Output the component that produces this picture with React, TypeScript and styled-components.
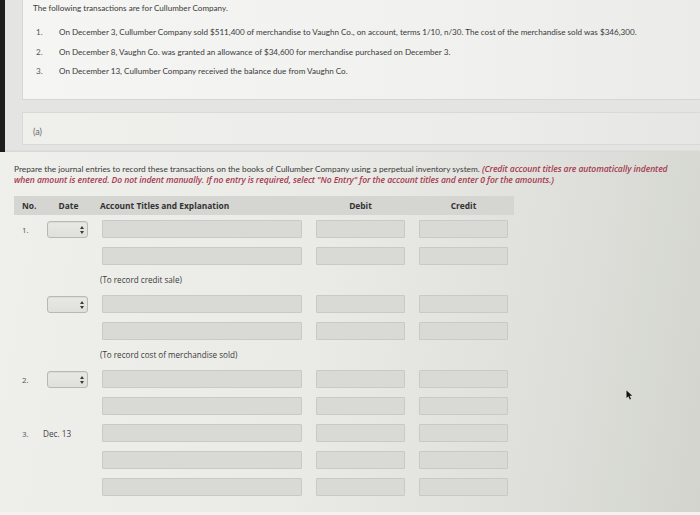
import React from "react";
import styled, {createGlobalStyle} from "styled-components";

const GlobalStyle = createGlobalStyle`
    html, body {
        margin: 0;
        padding: 0;
        background: #f2f2f0;
    }
    body {
        font-family: Lato, "Open Sans", sans-serif;
        color: #3a3a3a;
    }
`;

const Page = styled.div`
    width: 700px;
    height: 515px;
    overflow: hidden;
    display: flex;
    flex-direction: column;
    background: #f2f2f0;
`;

const TopFrame = styled.div`
    display: flex;
    flex-direction: column;
    gap: 12px;
    padding: 0 0 7px 17px;
    background: #e4e4e2;
    border-left: 5px solid #1e1e1e;
`;

const ProblemPanel = styled.div`
    box-sizing: border-box;
    height: 100px;
    padding: 3px 0 0 10px;
    background: linear-gradient(90deg, #f5f5f3 0%, #f1f1ef 60%, #ebebe9 100%);
    border-left: 1px solid #d6d6d3;
    border-bottom: 1px solid #d6d6d3;
`;

const Lead = styled.div`
    font-size: 8.1px;
    line-height: 11px;
`;

const ItemList = styled.ol`
    list-style: none;
    margin: 13px 0 0;
    padding: 0 0 0 3px;
    display: flex;
    flex-direction: column;
    gap: 8.5px;
`;

const Item = styled.li`
    display: grid;
    grid-template-columns: 23px auto;
    font-size: 8.1px;
    line-height: 11px;
`;

const ItemNo = styled.span`
    color: #555;
`;

const PartPanel = styled.div`
    box-sizing: border-box;
    height: 33px;
    padding: 13px 0 0 10px;
    background: linear-gradient(90deg, #efefec 0%, #ececea 70%, #e6e6e4 100%);
    border: 1px solid #d9d9d6;
    border-right: none;
    font-size: 9px;
    line-height: 12px;
    color: #6a6a6a;
`;

const WorkPanel = styled.div`
    position: relative;
    flex: 1;
    padding: 12px 14px 0;
    background: linear-gradient(100deg, #efefec 0%, #eaeae7 45%, #dedfda 78%, #d2d4cd 100%);
    box-shadow: 0 -1px 2px rgba(0, 0, 0, 0.08);
`;

const BottomStrip = styled.div`
    height: 3px;
    background: #f3f3f1;
`;

const Instructions = styled.p`
    margin: 0;
    font-size: 8.3px;
    line-height: 11px;
    white-space: nowrap;
`;

const Emphasis = styled.span`
    font-family: "Open Sans", Lato, sans-serif;
    font-style: italic;
    font-weight: 600;
    font-size: 8.6px;
    letter-spacing: -0.1px;
    color: #a53a4f;
`;

const Table = styled.div`
    width: 500px;
    margin-top: 10px;
`;

const columns = `
    display: grid;
    grid-template-columns: 15px 45px 200px 89px 89px;
    column-gap: 14px;
    align-items: center;
`;

const HeaderRow = styled.div`
    ${columns};
    height: 19px;
    background: #d5d5d2;
    font-family: "Open Sans", Lato, sans-serif;
    font-weight: 700;
    font-size: 8.4px;
    color: #333;
    white-space: nowrap;
`;

const HeadCell = styled.div<{align?: string; shift?: number}>`
    text-align: ${p => p.align || "left"};
    margin-left: ${p => p.shift || 0}px;
`;

const Body = styled.div`
    display: flex;
    flex-direction: column;
    gap: 9px;
    padding-top: 5px;
`;

const EntryRow = styled.div`
    ${columns};
    height: 18px;
`;

const RowNo = styled.div`
    padding-left: 8px;
    font-family: "Open Sans", Lato, sans-serif;
    font-size: 8px;
    color: #555;
`;

const DateText = styled.div`
    font-family: "Open Sans", Lato, sans-serif;
    font-size: 8.2px;
    color: #444;
    white-space: nowrap;
`;

const Select = styled.div`
    box-sizing: border-box;
    position: relative;
    width: 41px;
    height: 17px;
    margin-left: 4px;
    background: linear-gradient(180deg, #e8e8e5 0%, #dfdfdc 100%);
    border: 1px solid #b8b8b4;
    border-radius: 3px;
    box-shadow: inset 0 1px 1px rgba(0, 0, 0, 0.06);

    svg {
        position: absolute;
        right: 3px;
        top: 4px;
    }
`;

const Field = styled.div`
    box-sizing: border-box;
    height: 18px;
    background: #d9d9d5;
    border: 1px solid #c9c9c5;
    border-radius: 1px;
`;

const Note = styled.div`
    ${columns};
    height: 12px;
    font-family: "Open Sans", Lato, sans-serif;
    font-size: 8.1px;
    line-height: 12px;
    color: #3a3a3a;

    span {
        grid-column: 3 / -1;
        margin-left: -2px;
    }
`;

const Cursor = styled.svg`
    position: absolute;
    left: 626px;
    top: 238px;
`;

type Line = {no?: string; date?: "select" | string};
type Entry = {lines: Line[]; note?: string};

const entries: Entry[] = [
    {lines: [{no: "1.", date: "select"}, {}], note: "(To record credit sale)"},
    {lines: [{date: "select"}, {}], note: "(To record cost of merchandise sold)"},
    {lines: [{no: "2.", date: "select"}, {}]},
    {lines: [{no: "3.", date: "Dec. 13"}, {}, {}]},
];

const items = [
    "On December 3, Cullumber Company sold $511,400 of merchandise to Vaughn Co., on account, terms 1/10, n/30. The cost of the merchandise sold was $346,300.",
    "On December 8, Vaughn Co. was granted an allowance of $34,600 for merchandise purchased on December 3.",
    "On December 13, Cullumber Company received the balance due from Vaughn Co.",
];

function Arrows() {
    return (
        <svg width="4" height="8" viewBox="0 0 4 8">
            <path d="M2 0 L4 3 L0 3 Z" fill="#3a3a3a" />
            <path d="M2 8 L4 5 L0 5 Z" fill="#3a3a3a" />
        </svg>
    );
}

function JournalLine({line}: {line: Line}) {
    return (
        <EntryRow>
            <RowNo>{line.no}</RowNo>
            {line.date === "select" ? (
                <Select><Arrows /></Select>
            ) : (
                <DateText>{line.date}</DateText>
            )}
            <Field />
            <Field />
            <Field />
        </EntryRow>
    );
}

export default function App() {
    return (
        <Page>
            <GlobalStyle />
            <TopFrame>
                <ProblemPanel>
                    <Lead>The following transactions are for Cullumber Company.</Lead>
                    <ItemList>
                        {items.map((text, i) => (
                            <Item key={i}>
                                <ItemNo>{i + 1}.</ItemNo>
                                <span>{text}</span>
                            </Item>
                        ))}
                    </ItemList>
                </ProblemPanel>
                <PartPanel>(a)</PartPanel>
            </TopFrame>
            <WorkPanel>
                <Instructions>
                    Prepare the journal entries to record these transactions on the books of Cullumber Company using a perpetual inventory system.{" "}
                    <Emphasis>
                        (Credit account titles are automatically indented
                        <br />
                        when amount is entered. Do not indent manually. If no entry is required, select "No Entry" for the account titles and enter 0 for the amounts.)
                    </Emphasis>
                </Instructions>
                <Table>
                    <HeaderRow>
                        <HeadCell shift={8}>No.</HeadCell>
                        <HeadCell align="center" shift={6}>Date</HeadCell>
                        <HeadCell shift={-2}>Account Titles and Explanation</HeadCell>
                        <HeadCell align="center">Debit</HeadCell>
                        <HeadCell align="center">Credit</HeadCell>
                    </HeaderRow>
                    <Body>
                        {entries.map((entry, i) => (
                            <React.Fragment key={i}>
                                {entry.lines.map((line, j) => (
                                    <JournalLine key={j} line={line} />
                                ))}
                                {entry.note && (
                                    <Note><span>{entry.note}</span></Note>
                                )}
                            </React.Fragment>
                        ))}
                    </Body>
                </Table>
                <Cursor width="7" height="10" viewBox="0 0 7 10">
                    <path d="M0.5 0.5 L0.5 8 L2.4 6.2 L3.8 9.4 L5 8.9 L3.6 5.7 L6.2 5.7 Z" fill="#111" />
                </Cursor>
            </WorkPanel>
            <BottomStrip />
        </Page>
    );
}
